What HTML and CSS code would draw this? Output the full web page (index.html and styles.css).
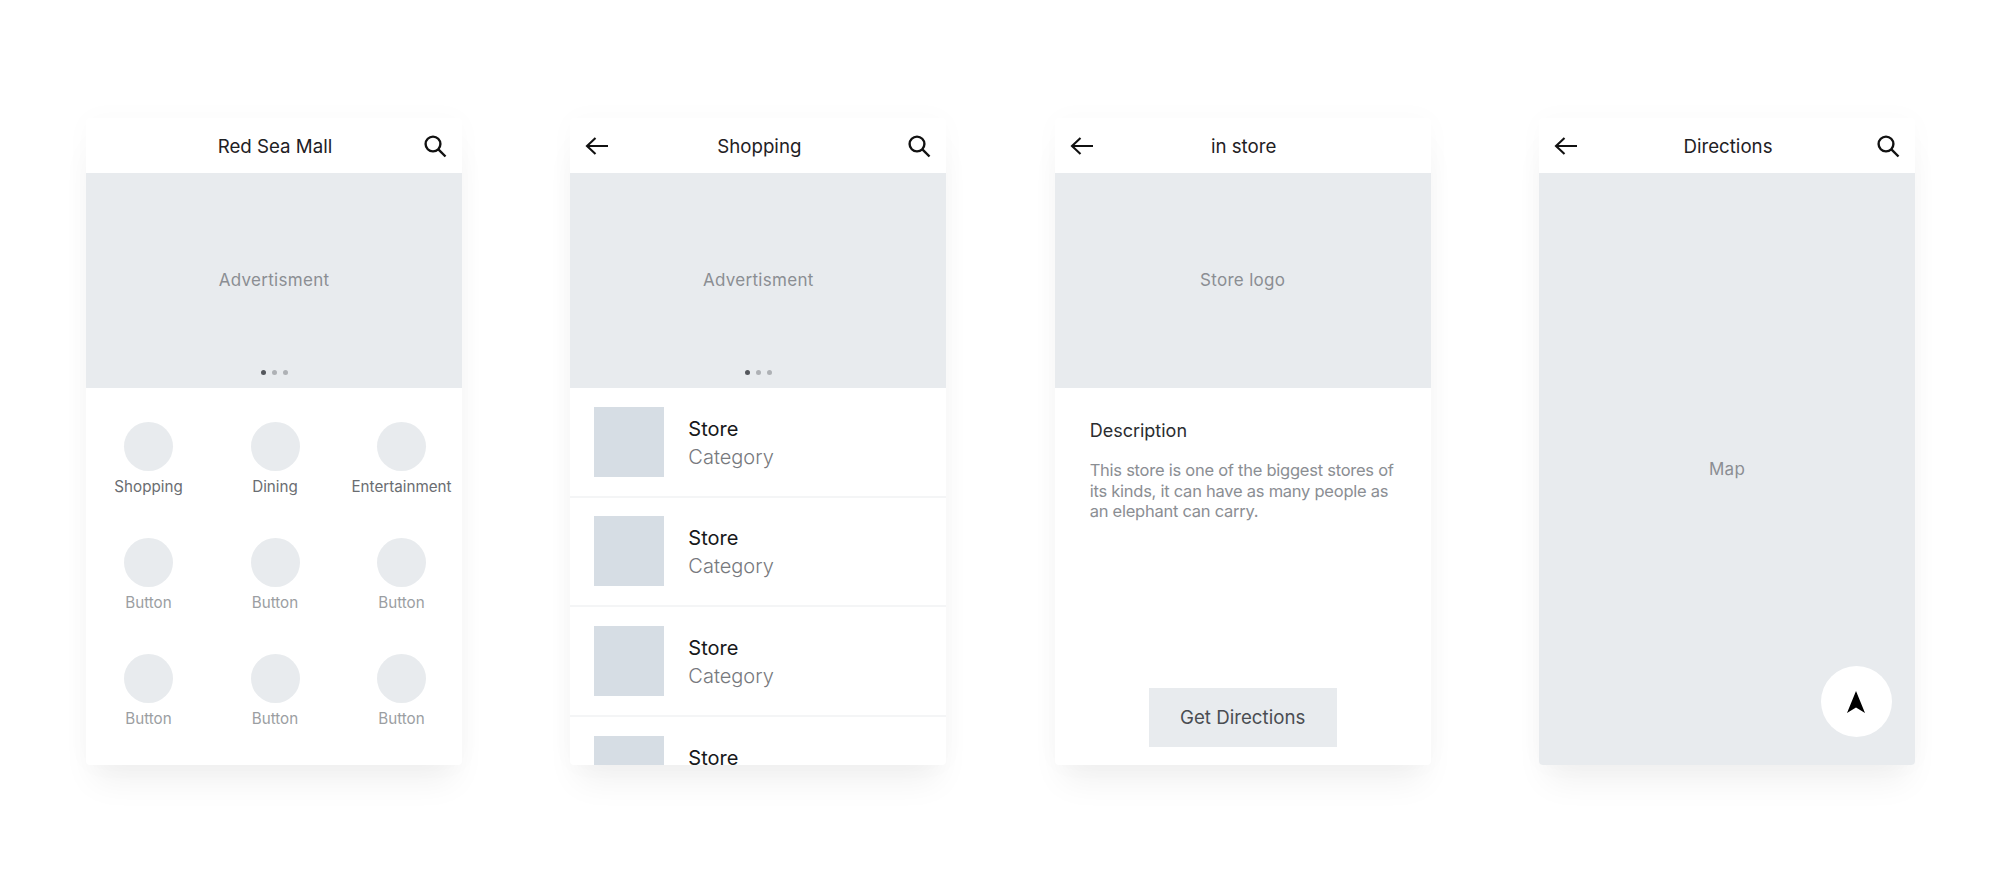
FILE: index.html
```html
<!DOCTYPE html>
<html lang="en">
<head>
    <meta charset="UTF-8">
    <meta name="viewport" content="width=device-width, initial-scale=1.0">
    <title>Red Sea Mall wireframes</title>
    <link rel="stylesheet" href="styles.css">
</head>
<body>
    <main class="board">
        <!-- home -->
        <section class="phone">
            <header class="top-bar">
                <span></span>
                <h1 class="top-title">Red Sea Mall</h1>
                <svg class="top-icon" viewBox="0 0 24 24"><circle cx="10" cy="10" r="7.4"/><path d="M15.4 15.4 22.5 22.5"/></svg>
            </header>
            <div class="hero">
                <span class="hero-label">Advertisment</span>
                <div class="dots"><i class="dot dot-active"></i><i class="dot"></i><i class="dot"></i></div>
            </div>
            <div class="button-grid">
                <div class="grid-item"><span class="circle"></span><span class="grid-label grid-label-dark">Shopping</span></div>
                <div class="grid-item"><span class="circle"></span><span class="grid-label grid-label-dark">Dining</span></div>
                <div class="grid-item"><span class="circle"></span><span class="grid-label grid-label-dark">Entertainment</span></div>
                <div class="grid-item"><span class="circle"></span><span class="grid-label">Button</span></div>
                <div class="grid-item"><span class="circle"></span><span class="grid-label">Button</span></div>
                <div class="grid-item"><span class="circle"></span><span class="grid-label">Button</span></div>
                <div class="grid-item"><span class="circle"></span><span class="grid-label">Button</span></div>
                <div class="grid-item"><span class="circle"></span><span class="grid-label">Button</span></div>
                <div class="grid-item"><span class="circle"></span><span class="grid-label">Button</span></div>
            </div>
        </section>

        <!-- shopping list -->
        <section class="phone">
            <header class="top-bar">
                <svg class="top-icon top-back" viewBox="0 0 24 24"><path d="M23 12H2M10.5 4 2 12l8.5 8"/></svg>
                <h1 class="top-title">Shopping</h1>
                <svg class="top-icon" viewBox="0 0 24 24"><circle cx="10" cy="10" r="7.4"/><path d="M15.4 15.4 22.5 22.5"/></svg>
            </header>
            <div class="hero">
                <span class="hero-label">Advertisment</span>
                <div class="dots"><i class="dot dot-active"></i><i class="dot"></i><i class="dot"></i></div>
            </div>
            <div class="store-list">
                <div class="store-row">
                    <span class="store-thumb"></span>
                    <div class="store-text"><span class="store-name">Store</span><span class="store-cat">Category</span></div>
                </div>
                <div class="store-row">
                    <span class="store-thumb"></span>
                    <div class="store-text"><span class="store-name">Store</span><span class="store-cat">Category</span></div>
                </div>
                <div class="store-row">
                    <span class="store-thumb"></span>
                    <div class="store-text"><span class="store-name">Store</span><span class="store-cat">Category</span></div>
                </div>
                <div class="store-row store-row-last">
                    <span class="store-thumb"></span>
                    <div class="store-text"><span class="store-name">Store</span></div>
                </div>
            </div>
        </section>

        <!-- store detail -->
        <section class="phone">
            <header class="top-bar">
                <svg class="top-icon top-back" viewBox="0 0 24 24"><path d="M23 12H2M10.5 4 2 12l8.5 8"/></svg>
                <h1 class="top-title">in store</h1>
                <span></span>
            </header>
            <div class="hero">
                <span class="hero-label">Store logo</span>
            </div>
            <div class="detail">
                <h2 class="detail-title">Description</h2>
                <p class="detail-text">This store is one of the biggest stores of its kinds, it can have as many people as an elephant can carry.</p>
                <button class="detail-btn">Get Directions</button>
            </div>
        </section>

        <!-- map -->
        <section class="phone">
            <header class="top-bar">
                <svg class="top-icon top-back" viewBox="0 0 24 24"><path d="M23 12H2M10.5 4 2 12l8.5 8"/></svg>
                <h1 class="top-title">Directions</h1>
                <svg class="top-icon" viewBox="0 0 24 24"><circle cx="10" cy="10" r="7.4"/><path d="M15.4 15.4 22.5 22.5"/></svg>
            </header>
            <div class="map">
                <span class="hero-label">Map</span>
                <button class="map-fab">
                    <svg class="map-arrow" viewBox="0 0 18 22"><path d="M9 0 18 22 9 16.6 0 22Z"/></svg>
                </button>
            </div>
        </section>
    </main>
</body>
</html>
```

FILE: styles.css
```css
:root {
    --placeholder: #e8ebee;
    --thumb: #d6dde4;
    --title: #1f2124;
    --muted: #8b8e93;
    --line: #f4f5f6;
}

body {
    margin: 0;
    background: #fff;
    font-family: 'Inter', 'Liberation Sans', sans-serif;
    color: var(--title);
}

.board {
    display: flex;
    gap: 108.33px;
    padding: 118px 0 60px 86px;
}

.phone {
    position: relative;
    display: flex;
    flex-direction: column;
    flex: none;
    width: 376px;
    height: 647px;
    overflow: hidden;
    background: #fff;
    border-radius: 4px;
    box-shadow: 0 24px 32px -8px rgba(0, 0, 0, 0.06), 0 0 28px rgba(0, 0, 0, 0.025);
}

.top-bar {
    display: grid;
    grid-template-columns: 24px 1fr 24px;
    align-items: center;
    flex: none;
    height: 55px;
    padding: 1px 15px 0;
    box-sizing: border-box;
}

.top-title {
    margin: 0;
    padding: 1px 0 0 2px;
    font-size: 18.7px;
    font-weight: 400;
    line-height: 24px;
    text-align: center;
}

.top-icon {
    display: block;
    width: 24px;
    height: 24px;
    fill: none;
    stroke: #111;
    stroke-width: 2.4;
}

.top-back {
    stroke-width: 2.1;
}

.hero {
    position: relative;
    display: flex;
    align-items: center;
    justify-content: center;
    flex: none;
    box-sizing: border-box;
    height: 215px;
    padding-bottom: 2px;
    background: var(--placeholder);
}

.hero-label {
    font-size: 17px;
    letter-spacing: 0.3px;
    color: var(--muted);
}

.dots {
    position: absolute;
    left: 0;
    right: 0;
    bottom: 13px;
    display: flex;
    justify-content: center;
    gap: 6px;
}

.dot {
    width: 5px;
    height: 5px;
    border-radius: 50%;
    background: #aeb1b5;
}

.dot-active {
    background: #54575c;
}

/* home grid */
.button-grid {
    display: grid;
    grid-template-columns: repeat(3, 125px);
    grid-auto-rows: 116px;
    column-gap: 1.5px;
    padding-top: 34px;
}

.grid-item {
    display: flex;
    flex-direction: column;
    align-items: center;
    gap: 6px;
}

.circle {
    width: 49px;
    height: 49px;
    border-radius: 50%;
    background: var(--placeholder);
}

.grid-label {
    font-size: 15.2px;
    line-height: 20px;
    white-space: nowrap;
    color: #9b9ea2;
}

.grid-label-dark {
    color: #6a6d71;
}

/* store list */
.store-row {
    display: flex;
    align-items: center;
    gap: 24px;
    box-sizing: border-box;
    height: 109.5px;
    padding: 0 24px;
    border-bottom: 2px solid var(--line);
}

.store-row-last {
    align-items: flex-start;
    padding-top: 19px;
    border-bottom: none;
}

.store-row-last .store-text {
    padding-top: 8px;
}

.store-thumb {
    flex: none;
    width: 70px;
    height: 70px;
    background: var(--thumb);
}

.store-text {
    display: flex;
    flex-direction: column;
    padding-top: 3px;
}

.store-name {
    font-size: 20px;
    line-height: 28px;
    color: #17181a;
}

.store-cat {
    font-size: 20px;
    font-weight: 300;
    line-height: 29px;
    color: #77797d;
}

/* store detail */
.detail {
    display: flex;
    flex-direction: column;
    flex: 1;
    padding: 30px 35px 18px;
}

.detail-title {
    margin: 0 0 16px;
    font-size: 18px;
    font-weight: 400;
    line-height: 26px;
    color: #2b2d30;
}

.detail-text {
    margin: 0;
    font-size: 16.5px;
    letter-spacing: -0.25px;
    line-height: 20.7px;
    color: var(--muted);
}

.detail-btn {
    align-self: center;
    width: 188px;
    height: 59px;
    margin-top: auto;
    border: none;
    background: var(--placeholder);
    font-family: inherit;
    font-size: 18.7px;
    color: #4a4d52;
}

/* map */
.map {
    position: relative;
    display: flex;
    align-items: center;
    justify-content: center;
    flex: 1;
    background: var(--placeholder);
}

.map-fab {
    position: absolute;
    right: 23px;
    bottom: 28px;
    display: flex;
    align-items: center;
    justify-content: center;
    width: 71px;
    height: 71px;
    padding: 0;
    border: none;
    border-radius: 50%;
    background: #fff;
}

.map-arrow {
    width: 18px;
    height: 22px;
    fill: #000;
}
```
